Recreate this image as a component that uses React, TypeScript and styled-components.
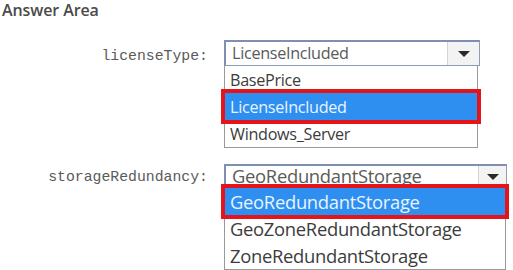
import React from "react";
import styled, { createGlobalStyle } from "styled-components";

const Global = createGlobalStyle`
  html, body { margin: 0; padding: 0; background: #ffffff; }
  body { width: 513px; height: 270px; overflow: hidden; }
`;

const Page = styled.div`
  width: 513px;
  height: 270px;
  box-sizing: border-box;
  font-family: "Open Sans", "Liberation Sans", sans-serif;
`;

const Title = styled.div`
  font-family: "Open Sans", "Liberation Sans", sans-serif;
  font-weight: 600;
  font-size: 16px;
  line-height: 20px;
  padding-left: 2px;
  color: #4a4a4a;
  letter-spacing: -0.1px;
`;

const Form = styled.div`
  display: grid;
  grid-template-columns: 208px auto;
  column-gap: 16px;
  row-gap: 16px;
  margin-top: 20px;
  align-items: start;
`;

const Label = styled.div<{ $top: number }>`
  font-family: "Liberation Mono", "DejaVu Sans Mono", monospace;
  font-size: 14.8px;
  color: #5a5a5a;
  text-align: right;
  margin-top: ${(p) => p.$top}px;
  line-height: 18px;
`;

const Field = styled.div<{ $w: number; $fs: number }>`
  display: flex;
  flex-direction: column;
  width: ${(p) => p.$w}px;
  font-size: ${(p) => p.$fs}px;
  letter-spacing: -0.3px;
`;

const Select = styled.div<{ $h: number }>`
  display: flex;
  align-items: stretch;
  height: ${(p) => p.$h}px;
  box-sizing: border-box;
  border: 1px solid #8e9cb8;
  border-top: 2px solid #7f8fb0;
  border-left: 2px solid #7f8fb0;
  background: #ffffff;
`;

const SelectValue = styled.div`
  flex: 1;
  display: flex;
  align-items: center;
  padding-left: 6px;
  line-height: 1.1;
  color: #5a5a5a;
  white-space: nowrap;
`;

const ArrowButton = styled.div<{ $w: number }>`
  width: ${(p) => p.$w}px;
  display: flex;
  align-items: center;
  justify-content: center;
  background: #f3f3f3;
  border-left: 1px solid #d4d4d4;
`;

const Arrow = styled.div`
  width: 0;
  height: 0;
  border-left: 6px solid transparent;
  border-right: 6px solid transparent;
  border-top: 6px solid #2a2a2a;
`;

const ListBox = styled.div<{ $w: number }>`
  width: ${(p) => p.$w}px;
  box-sizing: border-box;
  border: 1px solid #9a9a9a;
  border-top: none;
  background: #ffffff;
  display: flex;
  flex-direction: column;
`;

const Option = styled.div<{ $selected?: boolean }>`
  height: 27px;
  display: flex;
  align-items: center;
  padding-left: 5px;
  white-space: nowrap;
  color: ${(p) => (p.$selected ? "#e8f4ff" : "#3c3c3c")};
  background: ${(p) => (p.$selected ? "#2f8ff0" : "transparent")};
  outline: ${(p) => (p.$selected ? "4px solid #e4141b" : "none")};
  position: relative;
  z-index: ${(p) => (p.$selected ? 1 : 0)};
`;

type Group = {
  label: string;
  labelTop: number;
  value: string;
  fontSize: number;
  selectH: number;
  selectW: number;
  listW: number;
  buttonW: number;
  options: string[];
};

const groups: Group[] = [
  {
    label: "licenseType:",
    labelTop: 7,
    value: "LicenseIncluded",
    fontSize: 16.2,
    selectH: 26,
    selectW: 256,
    listW: 254,
    buttonW: 31,
    options: ["BasePrice", "LicenseIncluded", "Windows_Server"],
  },
  {
    label: "storageRedundancy:",
    labelTop: 4,
    value: "GeoRedundantStorage",
    fontSize: 18.4,
    selectH: 24,
    selectW: 283,
    listW: 282,
    buttonW: 27,
    options: ["GeoRedundantStorage", "GeoZoneRedundantStorage", "ZoneRedundantStorage"],
  },
];

export default function App() {
  return (
    <>
      <Global />
      <Page>
        <Title>Answer Area</Title>
        <Form>
          {groups.map((g) => (
            <React.Fragment key={g.label}>
              <Label $top={g.labelTop}>{g.label}</Label>
              <Field $w={g.selectW} $fs={g.fontSize}>
                <Select $h={g.selectH}>
                  <SelectValue>{g.value}</SelectValue>
                  <ArrowButton $w={g.buttonW}>
                    <Arrow />
                  </ArrowButton>
                </Select>
                <ListBox $w={g.listW}>
                  {g.options.map((o) => (
                    <Option key={o} $selected={o === g.value}>
                      {o}
                    </Option>
                  ))}
                </ListBox>
              </Field>
            </React.Fragment>
          ))}
        </Form>
      </Page>
    </>
  );
}
